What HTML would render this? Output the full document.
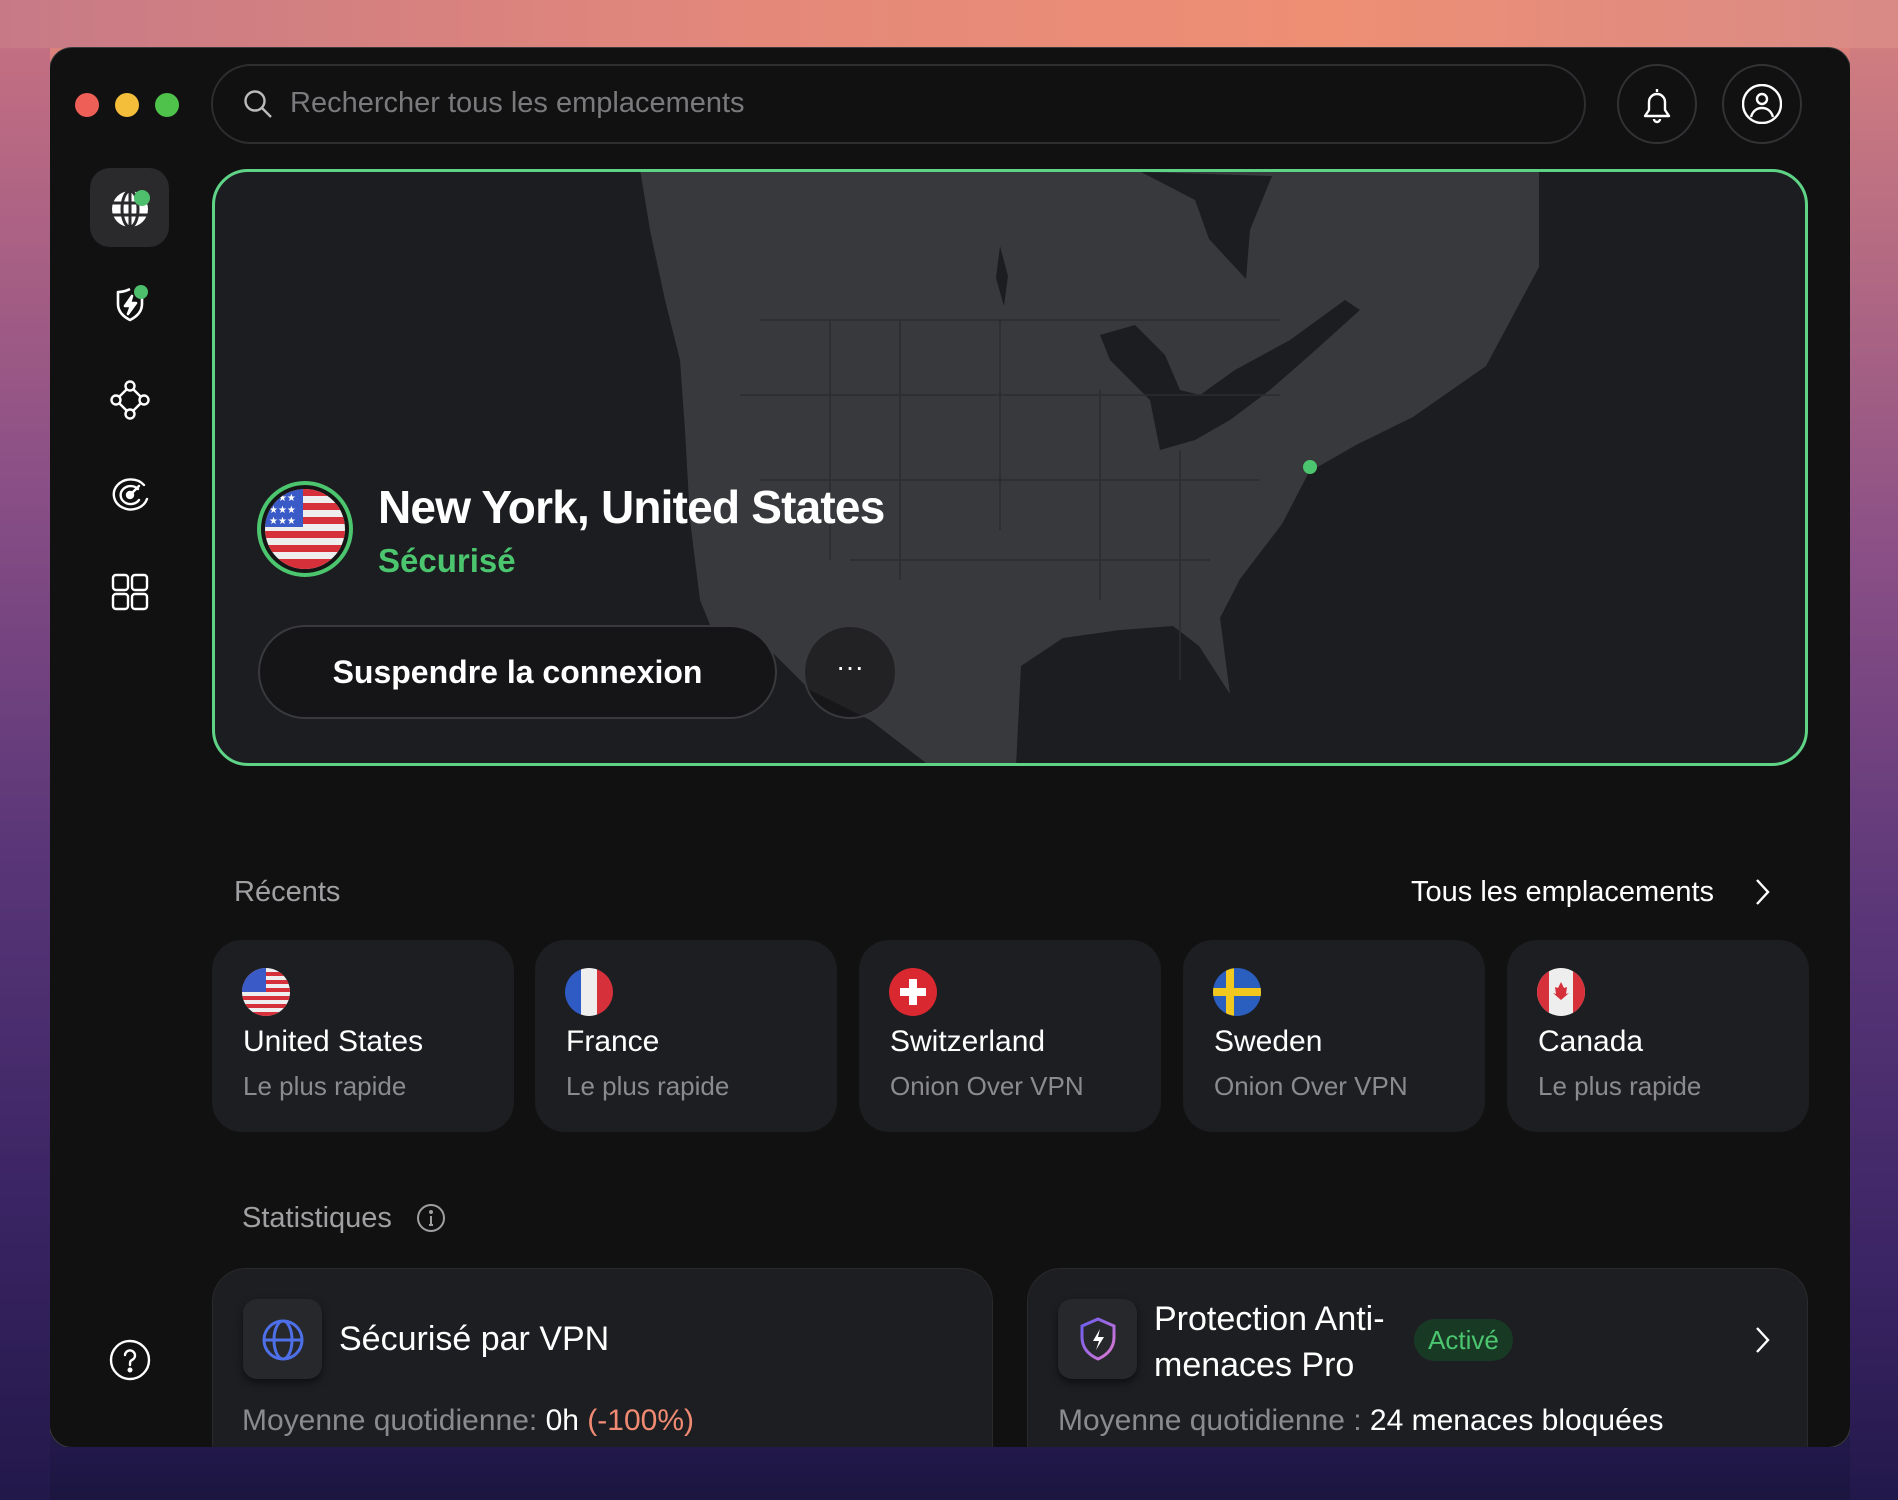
<!DOCTYPE html>
<html><head><meta charset="utf-8"><style>
*{margin:0;padding:0;box-sizing:border-box}
html,body{width:1898px;height:1500px;overflow:hidden}
body{position:relative;font-family:"Liberation Sans",sans-serif;background:linear-gradient(180deg,#e4887a 0%,#c36f82 12%,#8a4f86 35%,#5a3678 55%,#3a2463 75%,#1d1741 100%)}
.win{position:absolute;left:50px;top:48px;width:1800px;height:1399px;background:#111112;border-radius:22px;overflow:hidden;box-shadow:0 0 0 1px #3a3a3c}
.abs{position:absolute}
.dot{position:absolute;width:24px;height:24px;border-radius:50%;top:93px}
.txt{position:absolute;white-space:nowrap}
.card{position:absolute;top:940px;width:302px;height:192px;background:#1d1e21;border-radius:30px}
.card .f{position:absolute;left:30px;top:28px;width:48px;height:48px;border-radius:50%;overflow:hidden}
.card .n{position:absolute;left:31px;top:85px;font-size:30px;color:#fff}
.card .s{position:absolute;left:31px;top:131px;font-size:26px;color:#8b8b8e}
</style></head><body>
<div class="abs" style="left:0;top:0;width:1898px;height:48px;background:linear-gradient(90deg,#c77a86,#e4887a 40%,#ee8f74 70%,#d98a86)"></div>
<div class="win"></div>
<div class="dot" style="left:75px;background:#ee5f57"></div>
<div class="dot" style="left:115px;background:#f4bd3a"></div>
<div class="dot" style="left:155px;background:#4ec24a"></div>
<div class="abs" style="left:211px;top:64px;width:1375px;height:80px;border:2px solid #2e2e31;border-radius:40px"></div>
<svg class="abs" style="left:242px;top:88px" width="32" height="32" viewBox="0 0 32 32" fill="none" stroke="#bbb" stroke-width="2.4"><circle cx="13" cy="13" r="9.5"/><path d="M20 20l9 9"/></svg>
<div class="txt" style="left:290px;top:87px;font-size:29px;color:#7a7a7d">Rechercher tous les emplacements</div>
<div class="abs" style="left:1617px;top:64px;width:80px;height:80px;border:2px solid #333336;border-radius:50%"></div>
<svg class="abs" style="left:1637px;top:84px" width="40" height="40" viewBox="0 0 40 40" fill="none" stroke="#fff" stroke-width="2.4" stroke-linejoin="round"><path d="M20 5v3M12 18a8 8 0 0 1 16 0v8l4 6H8l4-6z"/><path d="M17 35a3 3 0 0 0 6 0"/></svg>
<div class="abs" style="left:1722px;top:64px;width:80px;height:80px;border:2px solid #333336;border-radius:50%"></div>
<svg class="abs" style="left:1742px;top:84px" width="40" height="40" viewBox="0 0 40 40" fill="none" stroke="#fff" stroke-width="2.4"><circle cx="20" cy="20" r="19"/><circle cx="20" cy="15" r="5"/><path d="M9 33c2-7 7-9 11-9s9 2 11 9"/></svg>
<div class="abs" style="left:90px;top:168px;width:79px;height:79px;background:#2a2a2d;border-radius:20px"></div>
<svg class="abs" style="left:108px;top:186px" width="44" height="44" viewBox="0 0 44 44"><circle cx="22" cy="23" r="18" fill="#fff"/><g stroke="#2a2a2d" stroke-width="3" fill="none"><path d="M4 17h36M4 29h36M22 5v36"/><ellipse cx="22" cy="23" rx="8" ry="18"/></g><circle cx="34" cy="12" r="8" fill="#4dbe6c"/></svg>
<svg class="abs" style="left:108px;top:281px" width="44" height="44" viewBox="0 0 44 44" fill="none" stroke="#fff" stroke-width="2.6" stroke-linejoin="round"><path d="M22 8c-4 2-8 3-12 3v12c0 8 6 13 12 16 6-3 12-8 12-16V14"/><path d="M24 15l-7 10h6l-3 8 8-11h-6z" fill="#fff"/><circle cx="33" cy="11" r="7" fill="#4dbe6c" stroke="none"/></svg>
<svg class="abs" style="left:110px;top:380px" width="40" height="40" viewBox="0 0 40 40" fill="none" stroke="#fff" stroke-width="2.4"><circle cx="20" cy="6" r="4.5"/><circle cx="20" cy="34" r="4.5"/><circle cx="6" cy="20" r="4.5"/><circle cx="34" cy="20" r="4.5"/><path d="M17 9L9 17M23 9l8 8M9 23l8 8M31 23l-8 8"/></svg>
<svg class="abs" style="left:110px;top:475px" width="40" height="40" viewBox="0 0 40 40" fill="none" stroke="#fff" stroke-width="2.4" stroke-linecap="round"><path d="M34 10A17 15 0 1 0 37 24"/><path d="M28 14A10 9 0 1 0 29 25"/><circle cx="20" cy="20" r="3" fill="#fff"/><path d="M20 20l9-9"/></svg>
<svg class="abs" style="left:111px;top:573px" width="38" height="38" viewBox="0 0 38 38" fill="none" stroke="#fff" stroke-width="2.4"><rect x="2" y="2" width="15" height="15" rx="3"/><rect x="21" y="2" width="15" height="15" rx="3"/><rect x="2" y="21" width="15" height="15" rx="3"/><rect x="21" y="21" width="15" height="15" rx="3"/></svg>
<svg class="abs" style="left:109px;top:1339px" width="42" height="42" viewBox="0 0 42 42" fill="none" stroke="#fff" stroke-width="2.4"><circle cx="21" cy="21" r="19"/><path d="M16 16a5 5 0 1 1 7 5c-2 1-2 2-2 5" stroke-linecap="round"/><circle cx="21" cy="31" r="1.3" fill="#fff"/></svg>
<div class="abs" style="left:212px;top:169px;width:1596px;height:597px;border-radius:36px;overflow:hidden;background:#1c1d20">
<svg width="1596" height="597" viewBox="212 169 1596 597" style="position:absolute;left:0;top:0">
<path fill="#38393d" d="M640 169L1539 169L1539 267L1486 366L1413 417L1356 445L1309 472L1282 524L1240 579L1220 618L1230 694L1199 646L1173 626L1120 630L1063 638L1021 666L1016 766L930 766L870 720L810 690L760 640L727 667L700 600L690 520L685 430L680 360L665 300L650 230Z"/>
<path fill="#1c1d20" d="M1141 172L1272 176L1250 230L1246 279L1209 239L1195 200Z"/>
<path fill="#1c1d20" d="M1100 335L1135 325L1165 355L1180 390L1200 395L1235 370L1290 340L1345 300L1360 310L1310 355L1270 390L1230 420L1195 440L1160 450L1150 400L1130 380L1110 360Z"/>
<path fill="#1c1d20" d="M1000 246l8 30-4 30-8-28z"/>
<path d="M760 320h520M740 395h540M760 480h500M850 560h360M900 320v260M1000 320v210M1100 390v210M830 320v240M1180 450v230" stroke="#2b2c30" stroke-width="1.5" fill="none"/>
<circle cx="1310" cy="467" r="7" fill="#4cc56f"/>
</svg>
</div>
<div class="abs" style="left:212px;top:169px;width:1596px;height:597px;border:3px solid #5fd386;border-radius:36px"></div>
<div class="abs" style="left:257px;top:481px;width:96px;height:96px;border-radius:50%;border:4px solid #4cc56f;background:#151515;padding:4px">
<svg width="80" height="80" viewBox="0 0 80 80" style="border-radius:50%;display:block"><rect width="80" height="80" fill="#eee"/><g fill="#d6303a"><rect y="0" width="80" height="7"/><rect y="14" width="80" height="7"/><rect y="28" width="80" height="7"/><rect y="42" width="80" height="7"/><rect y="56" width="80" height="7"/><rect y="70" width="80" height="10"/></g><rect width="38" height="38" fill="#3a5bc7"/><g fill="#fff" font-size="10" font-family="DejaVu Sans"><text x="4" y="12">★★★</text><text x="4" y="24">★★★</text><text x="4" y="35">★★★</text></g></svg></div>
<div class="txt" style="left:378px;top:480px;font-size:46px;font-weight:bold;color:#fff;letter-spacing:-0.8px">New York, United States</div>
<div class="txt" style="left:378px;top:542px;font-size:33px;font-weight:bold;color:#4cc56f">Sécurisé</div>
<div class="abs" style="left:258px;top:625px;width:519px;height:94px;border:2px solid #3a3a3d;border-radius:47px;background:#151517;color:#fff;font-size:32px;font-weight:bold;text-align:center;line-height:90px">Suspendre la connexion</div>
<div class="abs" style="left:803px;top:625px;width:94px;height:94px;border:2px solid #3a3a3d;border-radius:50%;background:rgba(20,20,22,.6);color:#fff;font-size:28px;text-align:center;line-height:80px">···</div>
<div class="txt" style="left:234px;top:876px;font-size:29px;color:#a0a0a3">Récents</div>
<div class="txt" style="left:1411px;top:876px;font-size:29px;color:#fff">Tous les emplacements</div>
<svg class="abs" style="left:1752px;top:876px" width="20" height="32" viewBox="0 0 20 32" fill="none" stroke="#fff" stroke-width="2.4"><path d="M5 4l11 12L5 28"/></svg>
<div class="card" style="left:212px"><div class="f"><svg width="48" height="48" viewBox="0 0 48 48"><rect width="48" height="48" fill="#eee"/><g fill="#d6303a"><rect y="4" width="48" height="4"/><rect y="12" width="48" height="4"/><rect y="20" width="48" height="4"/><rect y="28" width="48" height="4"/><rect y="36" width="48" height="4"/><rect y="44" width="48" height="4"/></g><rect width="24" height="24" fill="#3a5bc7"/></svg></div><div class="n">United States</div><div class="s">Le plus rapide</div></div>
<div class="card" style="left:535px"><div class="f"><svg width="48" height="48"><rect width="16" height="48" fill="#2f5bc4"/><rect x="16" width="16" height="48" fill="#eee"/><rect x="32" width="16" height="48" fill="#d6303a"/></svg></div><div class="n">France</div><div class="s">Le plus rapide</div></div>
<div class="card" style="left:859px"><div class="f"><svg width="48" height="48"><rect width="48" height="48" fill="#d9282f"/><rect x="20" y="11" width="8" height="26" fill="#fff"/><rect x="11" y="20" width="26" height="8" fill="#fff"/></svg></div><div class="n">Switzerland</div><div class="s">Onion Over VPN</div></div>
<div class="card" style="left:1183px"><div class="f"><svg width="48" height="48"><rect width="48" height="48" fill="#2a5fbf"/><rect x="13" width="8" height="48" fill="#f2c81e"/><rect y="20" width="48" height="8" fill="#f2c81e"/></svg></div><div class="n">Sweden</div><div class="s">Onion Over VPN</div></div>
<div class="card" style="left:1507px"><div class="f"><svg width="48" height="48"><rect width="48" height="48" fill="#eee"/><rect width="12" height="48" fill="#d6303a"/><rect x="36" width="12" height="48" fill="#d6303a"/><path d="M24 14l3 6 3-1-1 7 3-1-8 7-8-7 3 1-1-7 3 1z" fill="#d6303a"/></svg></div><div class="n">Canada</div><div class="s">Le plus rapide</div></div>
<div class="txt" style="left:242px;top:1202px;font-size:29px;color:#a0a0a3">Statistiques</div>
<svg class="abs" style="left:416px;top:1203px" width="30" height="30" viewBox="0 0 30 30" fill="none" stroke="#a0a0a3" stroke-width="2"><circle cx="15" cy="15" r="13"/><path d="M15 13v9M13 22h4"/><circle cx="15" cy="9" r="1" fill="#a0a0a3"/></svg>
<div class="abs" style="left:212px;top:1268px;width:781px;height:220px;background:#1d1e21;border-radius:34px;border:1px solid #2a2a2d"></div>
<div class="abs" style="left:1027px;top:1268px;width:781px;height:220px;background:#1d1e21;border-radius:34px;border:1px solid #2a2a2d"></div>
<div class="abs" style="left:243px;top:1299px;width:79px;height:80px;background:#27282b;border-radius:14px;box-shadow:0 4px 8px rgba(0,0,0,.5)"></div>
<svg class="abs" style="left:260px;top:1317px" width="46" height="46" viewBox="0 0 46 46" fill="none" stroke="#4d6fe8" stroke-width="3"><circle cx="23" cy="23" r="19"/><ellipse cx="23" cy="23" rx="9" ry="19"/><path d="M4 23h38"/></svg>
<div class="txt" style="left:339px;top:1320px;font-size:34px;color:#fff">Sécurisé par VPN</div>
<div class="txt" style="left:242px;top:1404px;font-size:30px;color:#8b8b8e">Moyenne quotidienne: <span style="color:#fff">0h</span> <span style="color:#f08a72">(-100%)</span></div>
<div class="abs" style="left:1058px;top:1299px;width:79px;height:80px;background:#27282b;border-radius:14px;box-shadow:0 4px 8px rgba(0,0,0,.5)"></div>
<svg class="abs" style="left:1076px;top:1315px" width="44" height="48" viewBox="0 0 44 48" fill="none" stroke-width="3"><defs><linearGradient id="g" x1="0" y1="0" x2="1" y2="1"><stop offset="0" stop-color="#6a5cf0"/><stop offset="1" stop-color="#e07ad0"/></linearGradient></defs><path d="M22 4L6 11v11c0 11 7 18 16 22 9-4 16-11 16-22V11z" stroke="url(#g)"/><path d="M24 14l-7 12h6l-3 9 8-13h-6z" fill="#fff"/></svg>
<div class="txt" style="left:1154px;top:1296px;font-size:34px;color:#fff;line-height:46px">Protection Anti-<br>menaces Pro</div>
<div class="abs" style="left:1414px;top:1319px;width:99px;height:42px;background:#183a25;border-radius:21px;color:#4cc56f;font-size:26px;text-align:center;line-height:42px">Activé</div>
<svg class="abs" style="left:1752px;top:1324px" width="20" height="32" viewBox="0 0 20 32" fill="none" stroke="#fff" stroke-width="2.4"><path d="M5 4l11 12L5 28"/></svg>
<div class="txt" style="left:1058px;top:1404px;font-size:30px;color:#8b8b8e">Moyenne quotidienne : <span style="color:#fff">24 menaces bloquées</span></div>
<div class="abs" style="left:0;top:1447px;width:1898px;height:53px;background:linear-gradient(180deg,#22184a,#1b1640)"></div>
<div class="abs" style="left:0;top:48px;width:50px;height:1452px;background:linear-gradient(180deg,#c36f82 0%,#8a4f86 30%,#5a3678 55%,#3a2463 80%,#22184a 100%)"></div>
<div class="abs" style="left:1850px;top:48px;width:48px;height:1452px;background:linear-gradient(180deg,#d07d80 0%,#8a4f86 35%,#5a3678 60%,#3a2463 85%,#22184a 100%)"></div>
</body></html>
